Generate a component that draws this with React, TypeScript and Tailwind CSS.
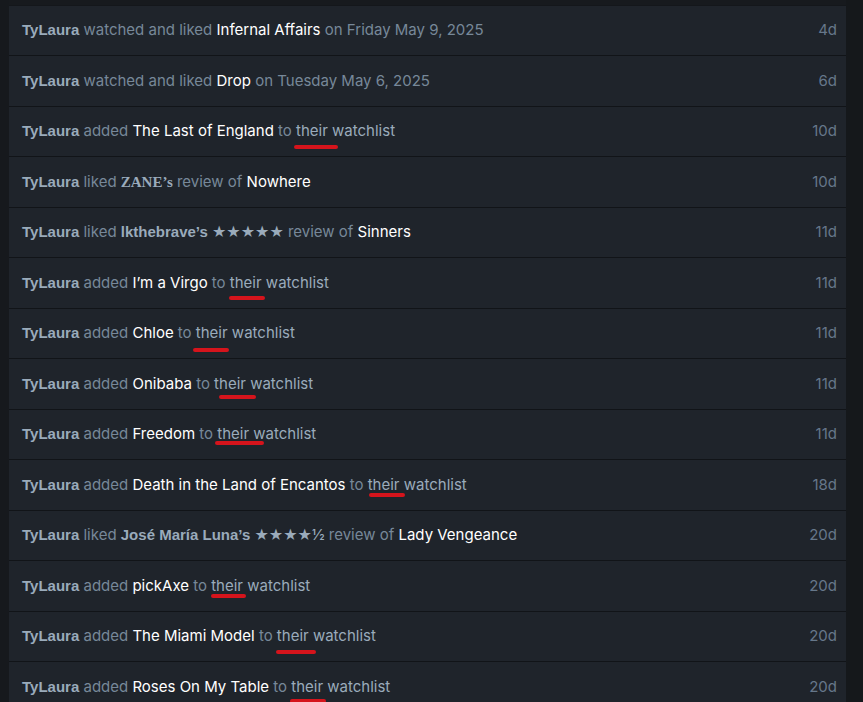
import type { ReactNode } from 'react'

type Mark = { dx: number; dy: number; w: number }

type Row = {
  body: ReactNode
  ago: string
}

const Title = ({ children }: { children: ReactNode }) => <span className="text-white">{children}</span>

const Who = ({ children }: { children: ReactNode }) => (
  <span className="font-bold text-[#9aabbb] [font-family:'Liberation_Sans',Arial,sans-serif]">
    {children}
  </span>
)

const Stars = ({ n, half }: { n: number; half?: boolean }) => (
  <span className="text-[#9aabbb]">
    <span className="text-[16px] leading-none [font-family:'DejaVu_Sans',sans-serif]">{'★'.repeat(n)}</span>
    {half && '½'}
  </span>
)

function Watchlist({ mark }: { mark: Mark }) {
  return (
    <>
      {' to '}
      <span className="relative text-[#9aabbb]">
        their
        <span
          className="absolute h-[4px] rounded-full bg-[#d5141c]"
          style={{ left: mark.dx, top: mark.dy, width: mark.w }}
        />
      </span>{' '}
      <span className="text-[#9aabbb]">watchlist</span>
    </>
  )
}

function added(film: string, mark: Mark, ago: string): Row {
  return {
    body: (
      <>
        added <Title>{film}</Title>
        <Watchlist mark={mark} />
      </>
    ),
    ago
  }
}

export default function App() {
  const rows: Row[] = [
    {
      body: (
        <>
          watched and liked <Title>Infernal Affairs</Title> on Friday May 9, 2025
        </>
      ),
      ago: '4d'
    },
    {
      body: (
        <>
          watched and liked <Title>Drop</Title> on Tuesday May 6, 2025
        </>
      ),
      ago: '6d'
    },
    added('The Last of England', { dx: -2, dy: 24, w: 44 }, '10d'),
    {
      body: (
        <>
          liked{' '}
          <span className="font-bold text-[#9aabbb] [font-family:'Liberation_Serif',serif]">
            ZANE’s
          </span>{' '}
          review of <Title>Nowhere</Title>
        </>
      ),
      ago: '10d'
    },
    {
      body: (
        <>
          liked <Who>lkthebrave’s</Who> <Stars n={5} /> review of <Title>Sinners</Title>
        </>
      ),
      ago: '11d'
    },
    added('I’m a Virgo', { dx: -1, dy: 23, w: 36 }, '11d'),
    added('Chloe', { dx: -3, dy: 25, w: 36 }, '11d'),
    added('Onibaba', { dx: 5, dy: 21, w: 37 }, '11d'),
    added('Freedom', { dx: -2, dy: 17, w: 49 }, '11d'),
    added('Death in the Land of Encantos', { dx: 1, dy: 18, w: 36 }, '18d'),
    {
      body: (
        <>
          liked <Who>José María Luna’s</Who> <Stars n={4} half /> review of <Title>Lady Vengeance</Title>
        </>
      ),
      ago: '20d'
    },
    added('pickAxe', { dx: 0, dy: 18, w: 35 }, '20d'),
    added('The Miami Model', { dx: -1, dy: 24, w: 40 }, '20d'),
    added('Roses On My Table', { dx: -1, dy: 22, w: 36 }, '20d')
  ]

  return (
    <div className="flex h-[702px] w-full overflow-hidden bg-[#171a1e] text-[15px] [font-family:Inter,'Liberation_Sans',sans-serif]">
      <div className="w-[9px] shrink-0 bg-[#16191d]" />
      <div className="flex w-[837px] shrink-0 flex-col pt-[5px]">
        <ul className="border-t border-[#14171b] bg-[#1f242b]">
          {rows.map((row, i) => (
            <li
              key={i}
              className={`flex items-center justify-between border-b border-[#111418] pl-[13px] pr-[9px] ${
                i % 2 === 0 ? 'h-[50px]' : 'h-[51px]'
              }`}
            >
              <p className="whitespace-nowrap text-[#778899]">
                <Who>TyLaura</Who> {row.body}
              </p>
              <span className="text-[#66778a]">{row.ago}</span>
            </li>
          ))}
        </ul>
      </div>
      <div className="flex-1 bg-[#15181b]" />
    </div>
  )
}
